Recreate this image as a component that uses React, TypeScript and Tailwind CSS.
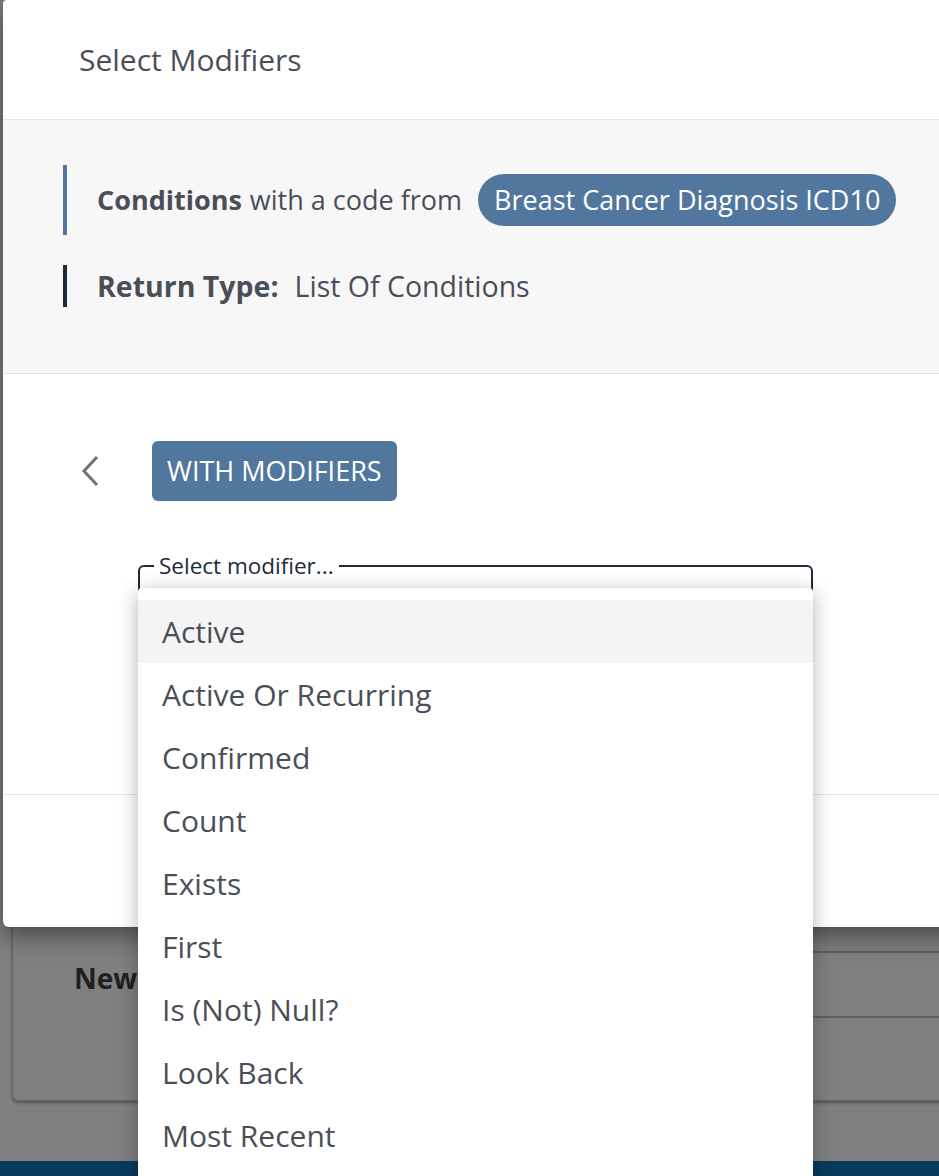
export default function App() {
  const items = [
    "Active",
    "Active Or Recurring",
    "Confirmed",
    "Count",
    "Exists",
    "First",
    "Is (Not) Null?",
    "Look Back",
    "Most Recent",
  ];
  return (
    <div className="relative w-[939px] h-[1176px] overflow-hidden bg-[#7f7f7f] font-['Open_Sans',sans-serif]">
      {/* background page */}
      <div className="flex flex-col h-full">
        <div className="ml-[12px] mr-[-30px] mt-[800px] h-[301px] rounded-[6px] border-l border-b border-[#666666] shadow-[0_2px_3px_rgba(0,0,0,0.35)] flex">
          <div className="pl-[61px] pt-[157px] text-[28px] font-bold text-[#1f1f1f]">New</div>
          <div className="ml-auto w-[500px] flex flex-col pt-[151px]">
            <div className="h-[67px] border-t-2 border-b-2 border-[#5f5f5f]"></div>
          </div>
        </div>
        <div className="flex-1"></div>
        <div className="h-[15px] bg-[#083a5e]"></div>
      </div>

      {/* modal */}
      <div className="absolute left-[3px] top-0 w-[1000px] h-[927px] bg-white rounded-bl-[6px] rounded-tl-[4px] shadow-[0_8px_24px_rgba(0,0,0,0.45)] flex flex-col text-[#4a4f57]">
        <div className="h-[120px] border-b border-[#e6e6e6] flex items-center pl-[76px] text-[30px]">
          Select Modifiers
        </div>
        <div className="bg-[#f7f7f7] border-b border-[#e3e3e3] pt-[45px] pb-[66px] pl-[60px] flex flex-col gap-[30px]">
          <div className="h-[70px] border-l-4 border-[#52779f] flex items-center pl-[30px] text-[27px]">
            <span className="font-bold">Conditions</span>
            <span className="ml-[8px]">with a code from</span>
            <span className="ml-[16px] h-[52px] px-[16px] rounded-full bg-[#52779f] text-white flex items-center">
              Breast Cancer Diagnosis ICD10
            </span>
          </div>
          <div className="h-[42px] border-l-4 border-[#1e2a38] flex items-center pl-[30px] text-[28.5px]">
            <span className="font-bold">Return Type:</span>
            <span className="ml-[16px]">List Of Conditions</span>
          </div>
        </div>
        <div className="h-[421px] border-b border-[#e6e6e6] flex flex-col pt-[67px]">
          <div className="flex items-center h-[60px]">
            <div className="ml-[77px] w-[20px] flex items-center">
              <svg width="20" height="32" viewBox="0 0 20 32">
                <polyline points="17,2 4,16 17,30" fill="none" stroke="#717171" strokeWidth="3" />
              </svg>
            </div>
            <div className="ml-[52px] h-[60px] px-[15px] rounded-[6px] bg-[#52779f] text-white text-[27px] flex items-center">
              WITH MODIFIERS
            </div>
          </div>
          <fieldset className="mt-[52px] ml-[135px] w-[675px] h-[70px] border-2 border-[#1d2b39] rounded-[6px]">
            <legend className="ml-[14px] px-[5px] text-[22.5px] leading-[26px] text-[#1d2b39]">Select modifier...</legend>
          </fieldset>
        </div>
        <div className="h-[131px]"></div>
      </div>

      {/* dropdown menu */}
      <div className="absolute left-[138px] top-[588px] w-[675px] bg-white rounded-t-[4px] shadow-[0_4px_20px_rgba(0,0,0,0.3)] pt-[12px] pb-[30px] flex flex-col">
        {items.map((it, i) => (
          <div
            key={it}
            className={
              "h-[63px] pl-[24px] flex items-center text-[30px] text-[#4a4f57] " +
              (i === 0 ? "bg-[#f4f4f4]" : "")
            }
          >
            {it}
          </div>
        ))}
      </div>
    </div>
  );
}
